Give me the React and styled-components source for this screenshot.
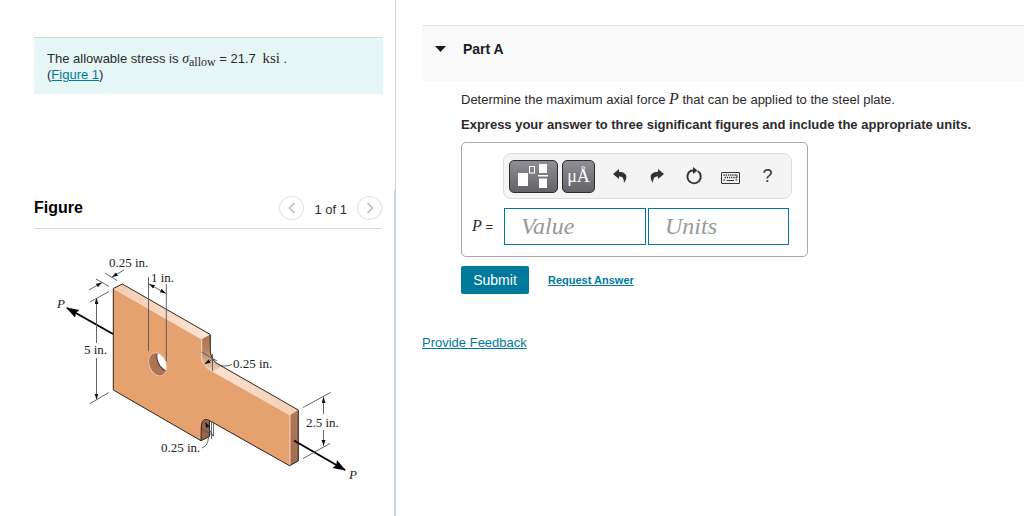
import React from 'react'
import styled, { createGlobalStyle } from 'styled-components'

const GlobalStyle = createGlobalStyle`
* {
    box-sizing: border-box;
}
body {
    margin: 0;
    background: #fff;
    color: #2b2b2b;
    font-family: "Liberation Sans", Arial, sans-serif;
    font-size: 13px;
    line-height: 16px;
}
button, input {
    font-family: inherit;
    margin: 0;
}
`
const Page = styled.div`
display: flex;
min-height: 100vh;
`
const Side = styled.div`
display: flex;
flex-direction: column;
flex: 0 0 396px;
`
const Problem = styled.section`
height: 190px;
padding: 37px 12px 0 34px;
border-right: 1px solid #c6d3de;
`
const Statement = styled.div`
padding: 13px 13px 11px;
background: #e6f6f6;
border-top: 1px solid #d3dcda;
`
const Math = styled.span`
font-family: "Liberation Serif", "Times New Roman", serif;
font-size: ${props => props.$size || 16}px;
font-style: ${props => (props.$italic ? 'italic' : 'normal')};
line-height: 0;
`
const Sub = styled.sub`
font-size: 12px;
line-height: 0;
vertical-align: -3px;
`
const Unit = styled(Math)`
margin-left: 3px;
`
const Link = styled.a`
color: #007a9c;
text-decoration: underline;
`
const FigurePanel = styled.section`
flex: 1;
padding: 6px 12px 0 34px;
border-right: 2px solid #bfd3e4;
`
const FigureHeader = styled.header`
display: flex;
align-items: center;
height: 33px;
padding-bottom: 8px;
border-bottom: 1px solid #d6dbdb;
`
const FigureTitle = styled.h2`
flex: 1;
margin: 0;
color: #000;
font-size: 16px;
line-height: 20px;
`
const Pager = styled.div`
display: flex;
align-items: center;
gap: 10px;
`
const Count = styled.span`
padding-top: 4px;
`
const PageButton = styled.button`
display: flex;
align-items: center;
justify-content: center;
width: 25px;
height: 24px;
padding: 0;
background: #fff;
border: 1px solid #e3e3e3;
border-radius: 50%;
`
const Drawing = styled.svg`
display: block;
width: 100%;
max-width: 348px;
`
const Main = styled.main`
flex: 1;
min-width: 0;
padding: 25px 0 0 26px;
`
const PartHeader = styled.header`
display: flex;
gap: 17px;
height: 56px;
padding: 15px 13px;
background: #f9f9f9;
border-top: 1px solid #e4e4e4;
`
const Toggle = styled.button`
display: flex;
align-items: center;
height: 16px;
padding: 0;
background: none;
border: 0;
`
const PartTitle = styled.h1`
margin: 0;
color: #1c1c1c;
font-size: 14px;
line-height: 16px;
`
const Body = styled.div`
padding: 11px 12px 0 39px;
`
const Text = styled.p`
margin: 0 0 9px;
font-weight: ${props => (props.$strong ? 'bold' : 'normal')};
`
const AnswerBox = styled.form`
width: fit-content;
padding: 10px 15px 11px 10px;
border: 1px solid #a9a9a9;
border-radius: 5px;
`
const Toolbar = styled.div`
display: flex;
align-items: center;
height: 46px;
margin-left: 31px;
padding: 0 5px;
background: #f4f4f4;
border: 1px solid #dcdcdc;
border-radius: 8px;
`
const Template = styled.button`
display: flex;
align-items: center;
justify-content: center;
width: ${props => props.$width}px;
height: 33px;
margin-right: 4px;
padding: 0;
color: #fff;
font-family: "Liberation Serif", "Times New Roman", serif;
font-size: 18px;
background: linear-gradient(#8e8e96, #636367);
border: 1px solid #2c2c2c;
border-radius: 5px;
`
const Tool = styled.button`
display: flex;
align-items: center;
justify-content: center;
width: 37px;
height: 33px;
padding: 0;
color: #333;
font-size: 18px;
background: none;
border: 0;
`
const Tools = styled.div`
display: flex;
flex: 1;
margin-left: 2px;
`
const Fields = styled.div`
display: flex;
align-items: center;
gap: 2px;
margin-top: 9px;
`
const FieldLabel = styled.label`
width: 30px;
`
const Field = styled.input`
width: ${props => props.$width}px;
height: 37px;
padding: 0 16px;
font-family: "Liberation Serif", Georgia, serif;
font-size: 24px;
font-style: italic;
background: #fff;
border: 1px solid #007a9c;
border-radius: 0;
&::placeholder {
    color: #999;
    opacity: 1;
}
`
const Actions = styled.div`
display: flex;
align-items: center;
gap: 19px;
margin-top: 9px;
`
const Submit = styled.button`
width: 68px;
height: 28px;
padding: 0;
color: #fff;
font-size: 14px;
background: #007a9c;
border: 0;
border-radius: 2px;
`
const RequestLink = styled(Link)`
font-size: 11px;
font-weight: bold;
`
const Feedback = styled.div`
margin-top: 41px;
`

const Chevron = ({ right }) => (
    <svg width="8" height="12" viewBox="0 0 8 12" fill="none" stroke="#b9b9b9" strokeWidth="1.4">
        <path d={right ? 'M1.5 1 6.5 6 1.5 11' : 'M6.5 1 1.5 6 6.5 11'} />
    </svg>
)

const TemplateIcon = () => (
    <svg width="32" height="26" viewBox="0 0 32 26" fill="#fff">
        <rect x="0" y="10" width="10" height="13" />
        <rect x="11.5" y="3.500" width="5" height="6.500" fill="none" stroke="#fff" />
        <rect x="21" y="1" width="8" height="9" />
        <rect x="20" y="12" width="10" height="1.5" />
        <rect x="21" y="15.5" width="8" height="9.5" />
    </svg>
)

const ArrowIcon = ({ redo }) => (
    <svg width="14" height="14" viewBox="0 0 14 14" fill="#333">
        <path
            transform={redo ? 'matrix(-1 0 0 1 14 0)' : undefined}
            d="M6 0 0 5l6 5V7.500c3.600 0 5 1.700 4.900 6.500C14.600 9.600 15 3 6 2.800z"
        />
    </svg>
)

const ResetIcon = () => (
    <svg width="18" height="18" viewBox="0 0 18 18">
        <path d="M6 3.700A6.700 6.700 0 1 0 12.700 4" fill="none" stroke="#333" strokeWidth="1.900" />
        <path d="M8 0 12.500 3.600 8 7V4.600L5 5V3L8 2.500z" fill="#333" />
    </svg>
)

const KeyboardIcon = () => (
    <svg width="19" height="18" viewBox="0 -5 19 18" fill="none" stroke="#333">
        <rect x=".5" y=".5" width="18" height="11" rx=".5" />
        <path d="M2.500 3H16M3.500 5.500H16M2.500 8H4" strokeDasharray="1.300 .9" strokeWidth="1.300" />
        <path d="M5.500 8.500H13M14.500 8H16.500M16 2.500V6" />
    </svg>
)

const PlateDrawing = () => (
    <Drawing viewBox="34 229 348 260" role="img" aria-label="Axially loaded steel plate">
        <defs>
            <linearGradient id="top" x1="0" y1="0" x2="1" y2="0">
                <stop offset="0" stopColor="#f3cdb0" />
                <stop offset=".5" stopColor="#fbe3d2" />
                <stop offset="1" stopColor="#f3cfb4" />
            </linearGradient>
            <linearGradient id="side" x1="0" y1="0" x2="0" y2="1">
                <stop offset="0" stopColor="#b07a59" />
                <stop offset="1" stopColor="#a06c4f" />
            </linearGradient>
            <linearGradient id="fillet" x1="0" y1="0" x2="0" y2="1">
                <stop offset="0" stopColor="#a87153" />
                <stop offset=".45" stopColor="#b98565" />
                <stop offset="1" stopColor="#f2d2bb" />
            </linearGradient>
            <clipPath id="hole">
                <ellipse cx="157.700" cy="364.300" rx="8.500" ry="12" transform="rotate(-22 157.700 364.300)" />
            </clipPath>
            <marker id="head" markerUnits="userSpaceOnUse" markerWidth="14" markerHeight="10" refX="12" refY="4.500" orient="auto">
                <path d="M0 0 13 4.500 0 9 2 4.500z" fill="#000" />
            </marker>
            <marker id="tick" markerUnits="userSpaceOnUse" markerWidth="6" markerHeight="5" refX="6" refY="2" orient="auto-start-reverse">
                <path d="M0 0 6 2 0 4z" fill="#111" />
            </marker>
        </defs>

        <g strokeLinejoin="round">
            <path d="M113.300 288.500 122.300 284 210.300 334.500V350Q210.500 359 217 363.500L298.300 410V461L289.500 465.700 209.500 421V436.500L201 440.700 180 420z" fill="url(#top)" />
            <path d="M201.700 339.300 210.300 334.500V350Q210.500 359 217 363.500L222 366.500 213 371.500Q202 366 201.700 358z" fill="url(#fillet)" />
            <path d="M290 415 298.300 410V461L289.500 465.700z" fill="url(#side)" />
            <path d="M201 420H209.500V436.500L201 440.700z" fill="#98644a" />
            <path d="M113.300 288.500 201.700 339.300V358Q202 366 213 371.700L290 415 289.500 465.700 212 422Q202 415 201.300 426.500L201 440.700 113.300 390z" fill="#e5a26e" />
            <path d="M113.300 288.500V390L201 440.700 201.300 426.500Q202 415 212 422L289.500 465.700" fill="none" stroke="#30241c" />
            <path d="M113.800 288.500 201.700 339.300V358Q202 366 213 371.700L290 415V465" fill="none" stroke="#f9dcc5" strokeWidth=".9" />
            <path d="M113.300 288.500 122.300 284 210.300 334.500V350Q210.500 359 217 363.500L298.300 410V461L289.500 465.700M201 440.700 209.500 436.500V421" fill="none" stroke="#30241c" />
        </g>

        <g clipPath="url(#hole)">
            <rect x="145" y="350" width="25" height="30" fill="#ad7454" />
            <ellipse cx="165.500" cy="359.500" rx="8" ry="12" transform="rotate(-22 165.500 359.500)" fill="#fff" stroke="#49372c" />
        </g>
        <ellipse cx="157.700" cy="364.300" rx="8.500" ry="12" transform="rotate(-22 157.700 364.300)" fill="none" stroke="#efc29f" strokeWidth=".9" />

        <g stroke="#000" strokeWidth="1.900">
            <path d="M113 334 67 308" markerEnd="url(#head)" />
            <path d="M294 440.500 345 470" markerEnd="url(#head)" />
        </g>

        <g fill="none" stroke="#555" strokeWidth=".9">
            <path d="M148.500 277V351M166.300 284V361" />
            <path d="M149 284 166 293.500" markerStart="url(#tick)" markerEnd="url(#tick)" />
            <path d="M105 273 117 280.500M96 279 109 286.500M90 302 109 291.500" />
            <path d="M124 270 112 277" markerEnd="url(#tick)" />
            <path d="M89 290 102 282.500" markerEnd="url(#tick)" />
            <path d="M96.500 343V298" markerEnd="url(#tick)" />
            <path d="M96.500 358V399.500" markerEnd="url(#tick)" />
            <path d="M90 403.500 109 392.500" />
            <path d="M303 407.500 330.500 392.500M303 458.500 330 443.500" />
            <path d="M323.500 414V397" markerEnd="url(#tick)" />
            <path d="M323.500 430V446" markerEnd="url(#tick)" />
            <path d="M201.500 352 217 361M212.500 354V371" />
            <path d="M232 364.500Q223 368 217 363.500" />
            <path d="M213 359 204.500 364" markerEnd="url(#tick)" />
            <path d="M202 429 214 436M211.500 421V439M213.500 423V436" />
            <path d="M202 448Q208 446 208.500 437" />
            <path d="M213 436 205 422" markerEnd="url(#tick)" />
        </g>

        <g fill="#222" fontFamily='"Liberation Serif", "Times New Roman", serif' fontSize="13">
            <text x="109" y="267">0.25 in.</text>
            <text x="151" y="282">1 in.</text>
            <text x="84" y="354">5 in.</text>
            <text x="233" y="368">0.25 in.</text>
            <text x="161" y="452">0.25 in.</text>
            <text x="306" y="427">2.5 in.</text>
            <text x="57" y="308" fontStyle="italic">P</text>
            <text x="349" y="479" fontStyle="italic">P</text>
        </g>
    </Drawing>
)

const App = () => {
    return (
        <Page>
            <GlobalStyle />
            <Side>
                <Problem>
                    <Statement>
                        The allowable stress is <Math $size={14}><i>σ</i><Sub>allow</Sub></Math> = 21.7 <Unit $size={15}>ksi</Unit> .
                        <br />
                        (<Link href="#figure">Figure 1</Link>)
                    </Statement>
                </Problem>
                <FigurePanel id="figure">
                    <FigureHeader>
                        <FigureTitle>Figure</FigureTitle>
                        <Pager>
                            <PageButton type="button" aria-label="Previous figure"><Chevron /></PageButton>
                            <Count>1 of 1</Count>
                            <PageButton type="button" aria-label="Next figure"><Chevron right /></PageButton>
                        </Pager>
                    </FigureHeader>
                    <PlateDrawing />
                </FigurePanel>
            </Side>
            <Main>
                <PartHeader>
                    <Toggle type="button" aria-label="Collapse Part A">
                        <svg width="11" height="6" viewBox="0 0 11 6"><path d="M0 0H11L5.500 6z" fill="#1c1c1c" /></svg>
                    </Toggle>
                    <PartTitle>Part A</PartTitle>
                </PartHeader>
                <Body>
                    <Text>Determine the maximum axial force <Math $italic>P</Math> that can be applied to the steel plate.</Text>
                    <Text $strong>Express your answer to three significant figures and include the appropriate units.</Text>
                    <AnswerBox>
                        <Toolbar>
                            <Template type="button" $width={49} aria-label="Templates"><TemplateIcon /></Template>
                            <Template type="button" $width={33}>μÅ</Template>
                            <Tools>
                                <Tool type="button" aria-label="Undo"><ArrowIcon /></Tool>
                                <Tool type="button" aria-label="Redo"><ArrowIcon redo /></Tool>
                                <Tool type="button" aria-label="Reset"><ResetIcon /></Tool>
                                <Tool type="button" aria-label="Keyboard"><KeyboardIcon /></Tool>
                                <Tool type="button">?</Tool>
                            </Tools>
                        </Toolbar>
                        <Fields>
                            <FieldLabel htmlFor="value"><Math $italic>P</Math> =</FieldLabel>
                            <Field id="value" $width={142} placeholder="Value" />
                            <Field id="units" $width={141} placeholder="Units" aria-label="Units" />
                        </Fields>
                    </AnswerBox>
                    <Actions>
                        <Submit type="button">Submit</Submit>
                        <RequestLink href="#answer">Request Answer</RequestLink>
                    </Actions>
                </Body>
                <Feedback>
                    <Link href="#feedback">Provide Feedback</Link>
                </Feedback>
            </Main>
        </Page>
    )
}

export default App
